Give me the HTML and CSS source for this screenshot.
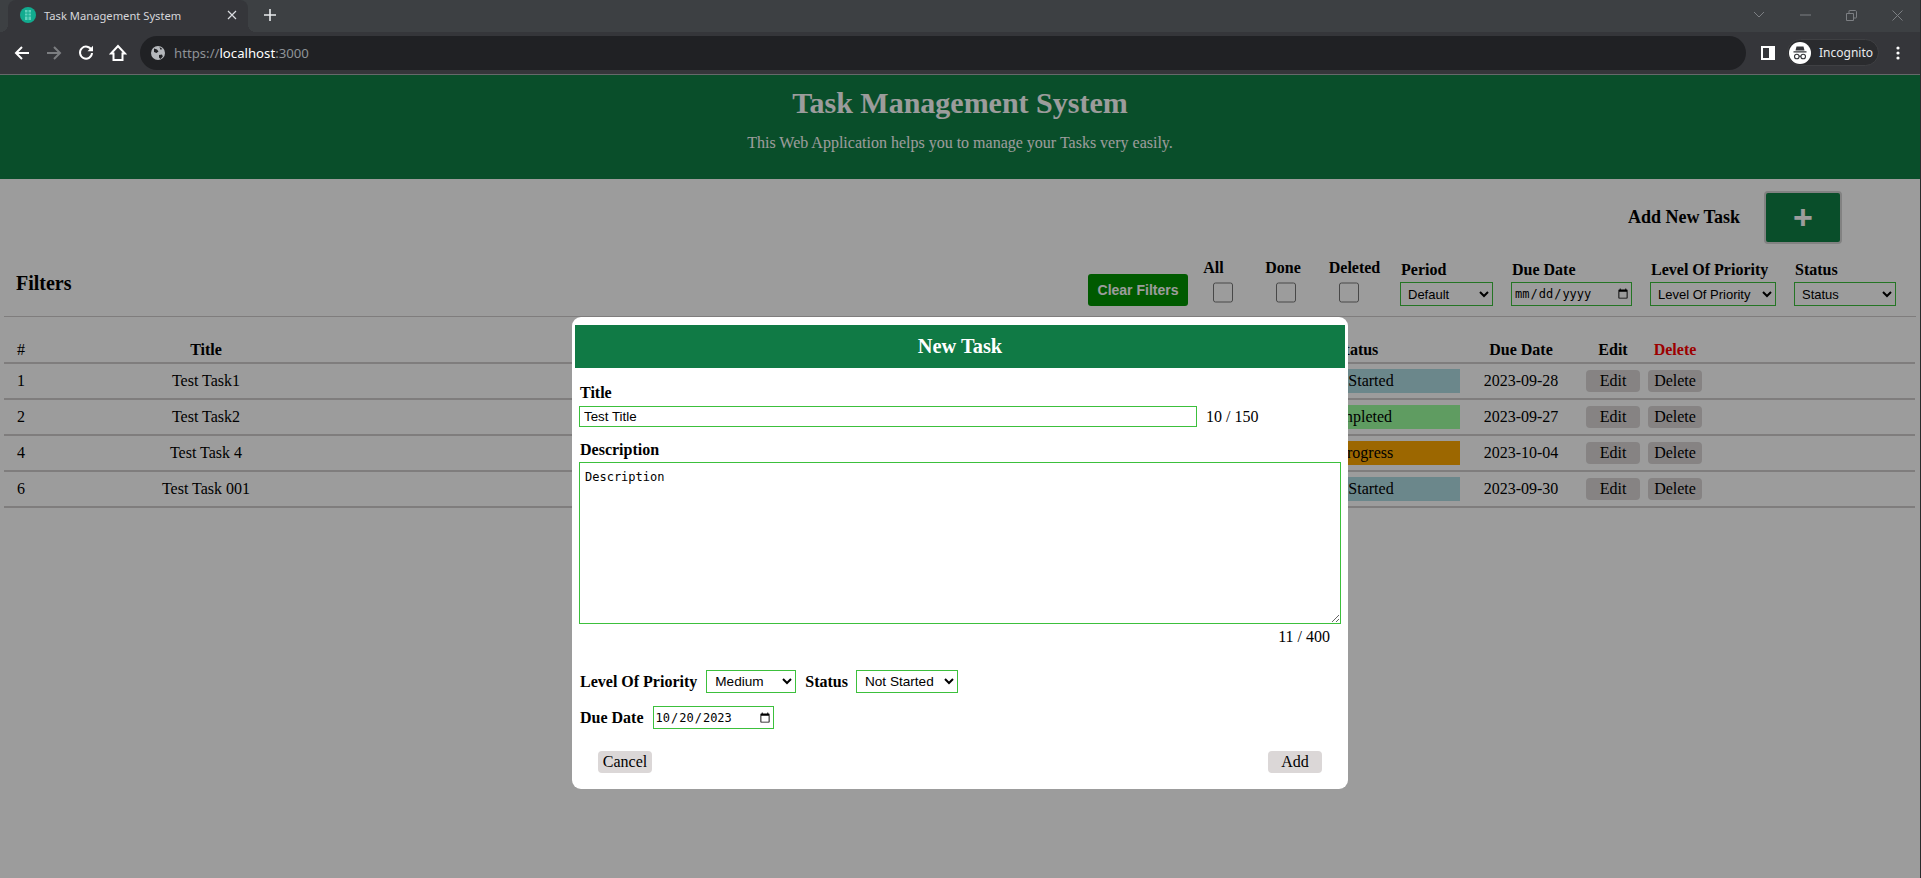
FILE: index.html
```html
<!DOCTYPE html>
<html lang="en">
<head>
    <meta charset="UTF-8">
    <title>Task Management System</title>
    <link rel="stylesheet" href="styles.css">
</head>
<body>
    <div class="browser">
        <div class="tabstrip">
            <div class="tab">
                <svg class="favicon" width="16" height="16" viewBox="0 0 16 16">
                    <circle cx="8" cy="8" r="8" fill="#12ab8f"/>
                    <path d="M5 3h6v10H5z" fill="#5fd0bb"/>
                    <path d="M8 3v10M5 6h6M5 9h6" stroke="#12ab8f" stroke-width="1"/>
                </svg>
                <span class="tab-title">Task Management System</span>
                <svg class="tab-close" width="10" height="10" viewBox="0 0 10 10"><path d="M1 1l8 8M9 1l-8 8" stroke="#dadce0" stroke-width="1.2"/></svg>
            </div>
            <svg class="new-tab" width="12" height="12" viewBox="0 0 12 12"><path d="M6 0v12M0 6h12" stroke="#e8eaed" stroke-width="1.6"/></svg>
            <div class="win-controls">
                <div class="win-btn"><svg width="12" height="8" viewBox="0 0 12 8"><path d="M1 1l5 5 5-5" fill="none" stroke="#7c7f83" stroke-width="1"/></svg></div>
                <div class="win-btn"><svg width="11" height="2" viewBox="0 0 11 2"><path d="M0 1h11" stroke="#7c7f83" stroke-width="1"/></svg></div>
                <div class="win-btn"><svg width="11" height="11" viewBox="0 0 11 11"><path d="M.5 3.500h7v7h-7zM3 3V1c0-.4.2-.5.5-.5H9c1 0 1.500.5 1.500 1.500v5.500c0 .3-.2.500-.5.500H8" fill="none" stroke="#7c7f83" stroke-width="1"/></svg></div>
                <div class="win-btn"><svg width="11" height="11" viewBox="0 0 11 11"><path d="M.5.500l10 10M10.500.500l-10 10" stroke="#7c7f83" stroke-width="1"/></svg></div>
            </div>
        </div>
        <div class="toolbar">
            <div class="nav-btn"><svg width="16" height="16" viewBox="0 0 16 16"><path d="M15 8H2M8 2L2 8l6 6" fill="none" stroke="#fff" stroke-width="2"/></svg></div>
            <div class="nav-btn"><svg width="16" height="16" viewBox="0 0 16 16"><path d="M1 8h13M8 2l6 6-6 6" fill="none" stroke="#7c7e81" stroke-width="2"/></svg></div>
            <div class="nav-btn"><svg width="16" height="16" viewBox="0 0 16 16"><path d="M13.500 5.200A6 6 0 1 0 14 8" fill="none" stroke="#fff" stroke-width="2"/><path d="M9.500 6.300H15V.800z" fill="#fff"/></svg></div>
            <div class="nav-btn"><svg width="18" height="18" viewBox="0 0 18 18"><path d="M9 2L2 9.500h2.500V16h9V9.500H16z" fill="none" stroke="#fff" stroke-width="2"/></svg></div>
            <div class="address">
                <svg class="globe" width="14" height="14" viewBox="0 0 14 14">
                    <circle cx="7" cy="7" r="7" fill="#b5b8bc"/>
                    <path d="M3 2.500l3 1 1.500 2-2 1.500-2.500-1zM8 9l3-.5.800 2L9.500 13 8 11.500zM8.500 1l3 2-2 .8z" fill="#202124"/>
                </svg>
                <span class="url-dim">https://</span><span class="url-host">localhost</span><span class="url-dim">:3000</span>
            </div>
            <svg class="side-panel" width="14" height="14" viewBox="0 0 14 14"><path d="M0 0h14v14H0z" fill="#fff"/><path d="M2 2h6v10H2z" fill="#35363a"/></svg>
            <div class="profile">
                <svg width="22" height="22" viewBox="0 0 22 22">
                    <circle cx="11" cy="11" r="11" fill="#fff"/>
                    <path d="M7.500 4.500h7l1 4H6.500zM4.500 9.200h13v1.300h-13z" fill="#35363a"/>
                    <circle cx="7.800" cy="14.500" r="2.300" fill="none" stroke="#35363a" stroke-width="1.100"/>
                    <circle cx="14.200" cy="14.500" r="2.300" fill="none" stroke="#35363a" stroke-width="1.100"/>
                    <path d="M10 14.300h2" stroke="#35363a" stroke-width="1.100"/>
                </svg>
                <span>Incognito</span>
            </div>
            <svg class="menu-dots" width="4" height="14" viewBox="0 0 4 14"><circle cx="2" cy="2" r="1.600" fill="#fff"/><circle cx="2" cy="7" r="1.600" fill="#fff"/><circle cx="2" cy="12" r="1.600" fill="#fff"/></svg>
        </div>
    </div>

    <div class="page">
        <header class="site-header">
            <h1>Task Management System</h1>
            <p>This Web Application helps you to manage your Tasks very easily.</p>
        </header>

        <div class="add-row">
            <span class="add-label">Add New Task</span>
            <button class="add-btn">+</button>
        </div>

        <div class="filters">
            <h3>Filters</h3>
            <div class="filter-controls">
                <button class="clear-btn">Clear Filters</button>
                <div class="check-col"><label class="lbl-all">All</label><input type="checkbox"></div>
                <div class="check-col"><label class="lbl-done">Done</label><input type="checkbox"></div>
                <div class="check-col"><label class="lbl-deleted">Deleted</label><input type="checkbox"></div>
                <div class="filter-col">
                    <label>Period</label>
                    <select class="sel-period"><option>Default</option></select>
                </div>
                <div class="filter-col">
                    <label>Due Date</label>
                    <input class="date-filter" type="date">
                </div>
                <div class="filter-col">
                    <label>Level Of Priority</label>
                    <select class="sel-level"><option>Level Of Priority</option></select>
                </div>
                <div class="filter-col">
                    <label>Status</label>
                    <select class="sel-status"><option>Status</option></select>
                </div>
            </div>
        </div>

        <table class="tasks">
            <colgroup>
                <col class="c-num"><col class="c-title"><col class="c-gap"><col class="c-status"><col class="c-due"><col class="c-edit"><col class="c-del"><col>
            </colgroup>
            <thead>
                <tr>
                    <th class="num">#</th><th>Title</th><th></th><th>Status</th><th>Due Date</th><th>Edit</th><th class="del-head">Delete</th><th></th>
                </tr>
            </thead>
            <tbody>
                <tr>
                    <td class="num">1</td><td>Test Task1</td><td></td>
                    <td><div class="status not-started">Not Started</div></td>
                    <td>2023-09-28</td><td><button class="row-btn">Edit</button></td><td><button class="row-btn">Delete</button></td><td></td>
                </tr>
                <tr>
                    <td class="num">2</td><td>Test Task2</td><td></td>
                    <td><div class="status completed">Completed</div></td>
                    <td>2023-09-27</td><td><button class="row-btn">Edit</button></td><td><button class="row-btn">Delete</button></td><td></td>
                </tr>
                <tr>
                    <td class="num">4</td><td>Test Task 4</td><td></td>
                    <td><div class="status in-progress">In Progress</div></td>
                    <td>2023-10-04</td><td><button class="row-btn">Edit</button></td><td><button class="row-btn">Delete</button></td><td></td>
                </tr>
                <tr>
                    <td class="num">6</td><td>Test Task 001</td><td></td>
                    <td><div class="status not-started">Not Started</div></td>
                    <td>2023-09-30</td><td><button class="row-btn">Edit</button></td><td><button class="row-btn">Delete</button></td><td></td>
                </tr>
            </tbody>
        </table>

        <div class="overlay">
            <div class="modal">
                <div class="modal-head">New Task</div>
                <form class="modal-form">
                    <label class="f-label">Title</label>
                    <div class="title-row">
                        <input class="f-title" type="text" value="Test Title">
                        <span>10 / 150</span>
                    </div>
                    <label class="f-label">Description</label>
                    <textarea class="f-desc">Description</textarea>
                    <div class="desc-count">11 / 400</div>
                    <div class="inline-row first-row">
                        <label class="f-label lbl-priority">Level Of Priority</label>
                        <select class="f-sel f-priority"><option>Medium</option></select>
                        <label class="f-label">Status</label>
                        <select class="f-sel f-status"><option>Not Started</option></select>
                    </div>
                    <div class="inline-row">
                        <label class="f-label">Due Date</label>
                        <input class="f-date" type="date" value="2023-10-20">
                    </div>
                    <div class="modal-actions">
                        <button type="button" class="m-btn">Cancel</button>
                        <button type="button" class="m-btn m-add">Add</button>
                    </div>
                </form>
            </div>
        </div>
    </div>
</body>
</html>
```

FILE: styles.css
```css
* {
    box-sizing: border-box;
}
body {
    margin: 0;
    height: 878px;
    padding-right: 1px;
    overflow: hidden;
    background-color: #2b2c2e;
    font-family: "Liberation Serif", serif;
    font-size: 16px;
    color: #000;
}

/* browser frame */
.browser {
    font-family: "Noto Sans", sans-serif;
    color: #e8eaed;
}
.tabstrip {
    display: flex;
    align-items: center;
    height: 32px;
    padding-bottom: 2px;
    background-color: #3d4043;
}
.tab {
    position: relative;
    display: flex;
    align-items: center;
    width: 240px;
    height: 32px;
    margin: 0 0 -2px 8px;
    padding: 0 12px 2px;
    background-color: #35363a;
    border-radius: 8px 8px 0 0;
}
.tab::before,
.tab::after {
    content: "";
    position: absolute;
    bottom: 0;
    width: 8px;
    height: 8px;
}
.tab::before {
    left: -8px;
    background: radial-gradient(circle at 0 0, transparent 8px, #35363a 8px);
}
.tab::after {
    right: -8px;
    background: radial-gradient(circle at 100% 0, transparent 8px, #35363a 8px);
}
.favicon {
    flex: none;
}
.tab-title {
    margin-left: 8px;
    font-size: 11.2px;
    color: #d5d7da;
    white-space: nowrap;
}
.tab-close {
    margin-left: auto;
    margin-right: -1px;
}
.new-tab {
    margin-left: 16px;
}
.win-controls {
    display: flex;
    margin-left: auto;
    height: 24px;
}
.win-btn {
    display: flex;
    align-items: center;
    justify-content: center;
    width: 46px;
}
.toolbar {
    display: flex;
    align-items: center;
    height: 43px;
    padding: 0 0 1px 6px;
    background-color: #35363a;
    border-bottom: 1px solid #66686a;
}
.nav-btn {
    display: flex;
    align-items: center;
    justify-content: center;
    width: 32px;
    height: 32px;
}
.address {
    display: flex;
    align-items: center;
    width: 1606px;
    height: 34px;
    margin-left: 6px;
    padding-left: 11px;
    border-radius: 17px;
    background-color: #202124;
    font-size: 13.2px;
}
.globe {
    margin-right: 9px;
}
.url-dim {
    color: #8e9297;
}
.url-host {
    color: #fff;
}
.side-panel {
    margin-left: 15px;
}
.profile {
    display: flex;
    align-items: center;
    width: 92px;
    height: 27px;
    margin-left: 12px;
    padding-left: 1px;
    border: 1px solid #3f4043;
    border-radius: 14px;
    background-color: #2a2b2e;
    font-size: 12px;
}
.profile span {
    margin-left: 8px;
}
.menu-dots {
    margin-left: 17px;
}

/* page */
.page {
    position: relative;
    height: 803px;
    overflow: hidden;
    background-color: #fff;
}
.site-header {
    height: 104px;
    padding-top: 12px;
    background-color: #108045;
    color: #fff;
    text-align: center;
}
.site-header h1 {
    margin: 0;
    font-size: 30px;
    line-height: 32px;
}
.site-header p {
    margin: 15px 0 0;
    line-height: 18px;
}
.add-row {
    display: flex;
    align-items: center;
    justify-content: flex-end;
    margin-top: 12px;
    padding-right: 78px;
}
.add-label {
    font-size: 18px;
    font-weight: bold;
}
.add-btn {
    width: 78px;
    height: 53px;
    margin-left: 24px;
    padding: 0;
    border: 2px solid #d4d4d4;
    border-radius: 4px;
    background-color: #108045;
    color: #fff;
    font-family: "Liberation Sans", Arial, sans-serif;
    font-size: 34px;
    font-weight: bold;
}
.filters {
    display: flex;
    align-items: flex-end;
    justify-content: space-between;
    height: 73px;
    margin: 0 4px;
    padding: 0 20px 10px 12px;
    border-bottom: 1px solid #d0cccc;
}
.filters h3 {
    margin: 0 0 11px;
    font-size: 20px;
}
.filter-controls {
    display: flex;
    align-items: flex-end;
}
.clear-btn {
    width: 100px;
    height: 32px;
    margin-right: 3px;
    padding: 0;
    border: 0;
    border-radius: 3px;
    background-color: #009400;
    color: #fff;
    font-family: "Liberation Sans", Arial, sans-serif;
    font-size: 14px;
    font-weight: bold;
}
.check-col {
    display: flex;
    flex-direction: column;
    align-items: center;
    width: 63px;
    font-weight: bold;
}
.check-col label {
    line-height: 18px;
    margin-bottom: 5px;
}
.lbl-all { margin-right: 18px; }
.lbl-done { margin-right: 5px; }
.lbl-deleted { margin-left: 12px; }
.check-col input {
    width: 20px;
    height: 21px;
    margin: 0 0 3px;
}
.filter-col {
    display: flex;
    flex-direction: column;
    margin-left: 18px;
    font-weight: bold;
}
.check-col + .filter-col {
    margin-left: 20px;
}
.filter-col label {
    line-height: 18px;
    margin-bottom: 3px;
    padding-left: 1px;
}
.filter-col select,
.filter-col input {
    height: 24px;
    padding-left: 3px;
    border: 1px solid #3cc03c;
    background-color: #fff;
    font-family: "Liberation Sans", Arial, sans-serif;
    font-size: 13px;
}
.filter-col .date-filter {
    padding-left: 2px;
    font-family: "DejaVu Sans Mono", monospace;
    font-size: 12px;
}
.sel-period {
    width: 93px;
}
.date-filter {
    width: 121px;
}
.sel-level {
    width: 126px;
}
.sel-status {
    width: 102px;
}
.tasks {
    width: 1911px;
    margin: 23px 0 0 4px;
    border-collapse: separate;
    border-spacing: 0;
    table-layout: fixed;
}
.c-num { width: 60px; }
.c-title { width: 284px; }
.c-gap { width: 906px; }
.c-status { width: 206px; }
.c-due { width: 122px; }
.c-edit { width: 62px; }
.c-del { width: 62px; }
.tasks th,
.tasks td {
    padding: 0;
    text-align: center;
    border-bottom: 2px solid #d0cccc;
}
.tasks th {
    height: 24px;
    padding-bottom: 2px;
}
.tasks td {
    height: 36px;
}
.tasks .num {
    padding-left: 13px;
    text-align: left;
    font-weight: normal;
}
.del-head {
    color: #ff0000;
}
.status {
    height: 24px;
    line-height: 24px;
}
.not-started { background-color: #b0dde4; }
.completed { background-color: #9cff9f; }
.in-progress { background-color: #ffa800; }
.row-btn,
.m-btn {
    width: 54px;
    height: 22px;
    padding: 0;
    border: 0;
    border-radius: 4px;
    background-color: #dbd7d7;
    font-family: "Liberation Serif", serif;
    font-size: 16px;
    color: #000;
}

/* modal */
.overlay {
    position: absolute;
    top: 0;
    right: 0;
    bottom: 0;
    left: 0;
    display: flex;
    justify-content: center;
    align-items: flex-start;
    background-color: rgba(0, 0, 0, 0.39);
}
.modal {
    width: 776px;
    height: 472px;
    margin-top: 242px;
    padding: 8px 3px 0;
    border-radius: 9px;
    background-color: #fff;
}
.modal-head {
    height: 43px;
    background-color: #107a45;
    color: #fff;
    font-size: 20.4px;
    font-weight: bold;
    line-height: 43px;
    text-align: center;
}
.modal-form {
    padding: 16px 4px 0;
}
.f-label {
    display: block;
    margin-left: 1px;
    font-weight: bold;
    line-height: 18px;
}
.modal-form input,
.modal-form select,
.modal-form textarea {
    border: 1px solid #3cc03c;
    border-radius: 0;
    background-color: #fff;
    outline: none;
}
.title-row {
    display: flex;
    align-items: center;
    margin: 4px 0 14px;
}
.f-title {
    width: 618px;
    height: 21px;
    margin-right: 9px;
    padding: 1px 4px;
    font-family: "Liberation Sans", Arial, sans-serif;
    font-size: 13.33px;
}
.f-desc {
    display: block;
    width: 762px;
    height: 162px;
    margin-top: 3px;
    padding: 7px 5px;
    font-family: "DejaVu Sans Mono", monospace;
    font-size: 12px;
}
.desc-count {
    padding-right: 11px;
    margin-top: 4px;
    line-height: 18px;
    text-align: right;
}
.inline-row {
    display: flex;
    align-items: center;
    gap: 8px;
    margin-bottom: 13px;
}
.first-row {
    margin-top: 24px;
}
.lbl-priority {
    margin-right: 1px;
}
.f-sel {
    height: 23px;
    padding-left: 4px;
    font-family: "Liberation Sans", Arial, sans-serif;
    font-size: 13.6px;
}
.f-priority {
    width: 90px;
}
.f-status {
    width: 102px;
}
.f-date {
    width: 121px;
    height: 23px;
    margin-left: 1px;
    font-family: "DejaVu Sans Mono", monospace;
    font-size: 12px;
}
.modal-actions {
    display: flex;
    justify-content: space-between;
    margin-top: 22px;
    padding: 0 19px;
}
```
